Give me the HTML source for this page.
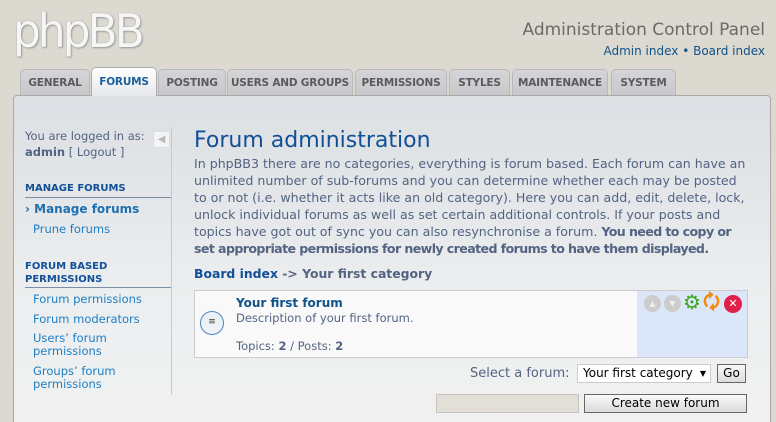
<!DOCTYPE html>
<html><head><style>
*{margin:0;padding:0;box-sizing:border-box}
html,body{width:776px;height:422px;overflow:hidden}
body{background:#dcd9d1;font-family:"DejaVu Sans",Verdana,sans-serif;position:relative}
.a{position:absolute;white-space:nowrap}
.logo{left:13px;top:4px;font:46px "DejaVu Sans",sans-serif;color:#f6f6f6;letter-spacing:-3px;text-shadow:0 0 1px #888,1px 1px 2px #999;transform:scaleX(0.95);transform-origin:left}
.tab{position:absolute;top:69px;height:26px;background:linear-gradient(#d4d5d8,#c7c8cc);border:1px solid #b9b9b9;border-bottom:none;border-radius:5px 5px 0 0;font:bold 10.5px "DejaVu Sans",sans-serif;color:#5b5b5b;text-align:center;line-height:27px;white-space:nowrap;overflow:hidden;letter-spacing:-0.2px}
.tab.on{top:67px;height:29px;background:linear-gradient(#fff,#e6e8eb);color:#1d5f9a;z-index:3;border-color:#aaa;line-height:29px}
.panel{position:absolute;left:13px;top:95px;width:758px;height:340px;background:linear-gradient(#dcdfe3,#eceeef 60%,#f1f1f1);border:1px solid #a9a9a9;border-radius:4px 4px 0 0}
.side{font-size:11.5px;color:#536482}
.h{font:bold 10px "DejaVu Sans",sans-serif;color:#115098;line-height:13px}
.lnk{color:#1d80c5;font-size:11.5px}
p{font-size:12.6px;line-height:17px;color:#536482}
p b{letter-spacing:-0.6px}
</style></head><body>
<div class="a logo">phpBB</div>
<div class="a" style="right:11px;top:20px;font-size:17px;color:#6a6a6a">Administration Control Panel</div>
<div class="a" style="right:11px;top:44px;font-size:12px;color:#105289">Admin index • Board index</div>
<div class="panel"></div>
<div class="tab" style="left:20px;width:70px">GENERAL</div>
<div class="tab on" style="left:91px;width:66px">FORUMS</div>
<div class="tab" style="left:158px;width:68px">POSTING</div>
<div class="tab" style="left:227px;width:126px">USERS AND GROUPS</div>
<div class="tab" style="left:355px;width:92px">PERMISSIONS</div>
<div class="tab" style="left:449px;width:61px">STYLES</div>
<div class="tab" style="left:512px;width:96px">MAINTENANCE</div>
<div class="tab" style="left:611px;width:65px">SYSTEM</div>

<div class="a side" style="left:25px;top:129px">You are logged in as:</div>
<div class="a side" style="left:25px;top:145px"><b>admin</b> [ Logout ]</div>
<div class="a" style="left:153px;top:131px;width:17px;height:17px;background:#f4f4f4;border:1px solid #ddd;color:#bbb;font-size:10px;text-align:center;line-height:15px">◀</div>
<div class="a" style="left:171px;top:127px;width:1px;height:268px;background:#c6c9ce"></div>
<div class="a h" style="left:25px;top:182px">MANAGE FORUMS</div>
<div class="a" style="left:25px;top:197px;width:146px;height:1px;background:#7a8ea8"></div>
<div class="a" style="left:25px;top:202px;font-size:12px;font-weight:bold;color:#1d70b0">› Manage forums</div>
<div class="a lnk" style="left:33px;top:222px">Prune forums</div>
<div class="a h" style="left:25px;top:260px">FORUM BASED<br>PERMISSIONS</div>
<div class="a" style="left:25px;top:287px;width:146px;height:1px;background:#7a8ea8"></div>
<div class="a lnk" style="left:33px;top:292px">Forum permissions</div>
<div class="a lnk" style="left:33px;top:312px">Forum moderators</div>
<div class="a lnk" style="left:33px;top:332px;line-height:13px">Users’ forum<br>permissions</div>
<div class="a lnk" style="left:33px;top:365px;line-height:13px">Groups’ forum<br>permissions</div>

<div class="a" style="left:194px;top:128px;font-size:22px;color:#115098">Forum administration</div>
<div class="a" style="left:194px;top:155px"><p>In phpBB3 there are no categories, everything is forum based. Each forum can have an<br>unlimited number of sub-forums and you can determine whether each may be posted<br>to or not (i.e. whether it acts like an old category). Here you can add, edit, delete, lock,<br>unlock individual forums as well as set certain additional controls. If your posts and<br>topics have got out of sync you can also resynchronise a forum. <b>You need to copy or<br>set appropriate permissions for newly created forums to have them displayed.</b></p></div>
<div class="a" style="left:194px;top:266px;font-size:12.4px;font-weight:bold;color:#115098">Board index <span style="color:#536482">-&gt; Your first category</span></div>

<div class="a" style="left:194px;top:290px;width:554px;height:68px;background:#f9f9f9;border:1px solid #ccc"></div>
<div class="a" style="left:637px;top:291px;width:110px;height:66px;background:#dbe7f8"></div>
<div class="a" style="left:200px;top:311px;width:24px;height:24px;border-radius:50%;border:1.5px solid #4a86c0;background:#eef2f7;color:#333;font-size:9px;text-align:center;line-height:20px">≡</div>
<div class="a" style="left:236px;top:296px;font-size:12px;font-weight:bold;color:#105289">Your first forum</div>
<div class="a" style="left:236px;top:311px;font-size:11.5px;color:#536482">Description of your first forum.</div>
<div class="a" style="left:236px;top:339px;font-size:11.5px;color:#536482">Topics: <b>2</b> / Posts: <b>2</b></div>
<div class="a" style="left:644px;top:295px;width:17px;height:17px;border-radius:50%;background:#ccc;color:#eee;font-size:8px;text-align:center;line-height:17px">▲</div>
<div class="a" style="left:664px;top:295px;width:17px;height:17px;border-radius:50%;background:#ccc;color:#eee;font-size:8px;text-align:center;line-height:17px">▼</div>
<div class="a" style="left:683px;top:292px;font-size:20px;color:#3aa81c;line-height:21px;font-weight:bold">⚙</div>
<div class="a" style="left:703px;top:292px;font-size:19px;color:#f58a0e;font-weight:bold;line-height:20px">🗘</div>
<div class="a" style="left:724px;top:295px;width:18px;height:18px;border-radius:50%;background:#e2204a;color:#fff;font-size:11px;font-weight:bold;text-align:center;line-height:18px">✕</div>

<div class="a" style="left:470px;top:366px;font-size:13px;color:#536482">Select a forum:</div>
<div class="a" style="left:577px;top:364px;width:134px;height:19px;background:#fff;border:1px solid #ccc;font-size:12px;padding-left:5px;line-height:17px;color:#000">Your first category <span style="position:absolute;right:4px;font-size:8px">▼</span></div>
<div class="a" style="left:717px;top:364px;width:29px;height:19px;background:linear-gradient(#f8f8f8,#ddd);border:1px solid #666;font-size:12px;text-align:center;line-height:17px">Go</div>
<div class="a" style="left:436px;top:394px;width:143px;height:19px;background:#e2dfd9;border:1px solid #c7c4bd"></div>
<div class="a" style="left:584px;top:394px;width:163px;height:19px;background:linear-gradient(#fafafa,#dadada);border:1px solid #666;font-size:12px;text-align:center;line-height:17px">Create new forum</div>
</body></html>
